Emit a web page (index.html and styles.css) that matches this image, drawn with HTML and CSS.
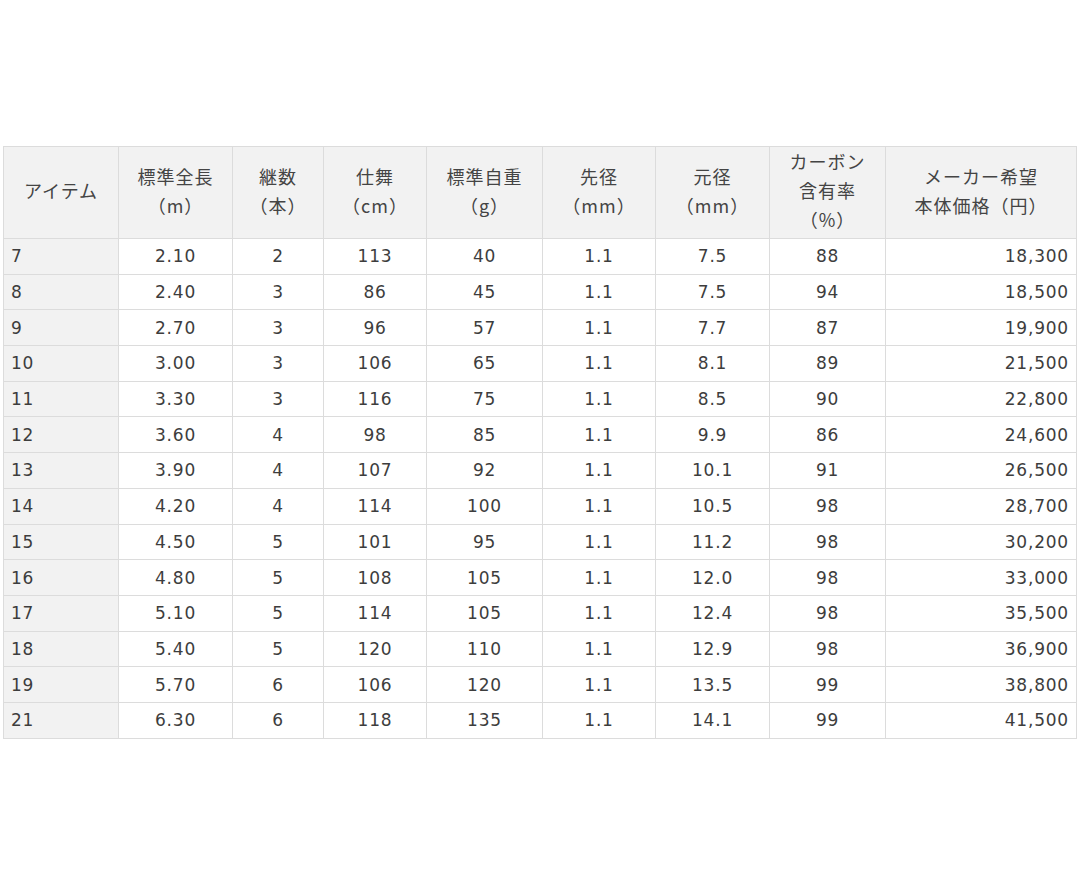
FILE: index.html
```html
<!DOCTYPE html>
<html lang="ja">
<head>
<meta charset="utf-8">
<link rel="stylesheet" href="styles.css">
</head>
<body>
<div class="wrap">
<table class="spec">
<colgroup>
<col class="c1"><col class="c2"><col class="c3"><col class="c4"><col class="c5"><col class="c6"><col class="c7"><col class="c8"><col class="c9">
</colgroup>
<thead>
<tr>
<th>アイテム</th>
<th>標準全長<br>（m）</th>
<th>継数<br>（本）</th>
<th>仕舞<br>（cm）</th>
<th>標準自重<br>（g）</th>
<th>先径<br>（mm）</th>
<th>元径<br>（mm）</th>
<th>カーボン<br>含有率<br>（%）</th>
<th>メーカー希望<br>本体価格（円）</th>
</tr>
</thead>
<tbody>
<tr><td class="item">7</td><td>2.10</td><td>2</td><td>113</td><td>40</td><td>1.1</td><td>7.5</td><td>88</td><td class="price">18,300</td></tr>
<tr><td class="item">8</td><td>2.40</td><td>3</td><td>86</td><td>45</td><td>1.1</td><td>7.5</td><td>94</td><td class="price">18,500</td></tr>
<tr><td class="item">9</td><td>2.70</td><td>3</td><td>96</td><td>57</td><td>1.1</td><td>7.7</td><td>87</td><td class="price">19,900</td></tr>
<tr><td class="item">10</td><td>3.00</td><td>3</td><td>106</td><td>65</td><td>1.1</td><td>8.1</td><td>89</td><td class="price">21,500</td></tr>
<tr><td class="item">11</td><td>3.30</td><td>3</td><td>116</td><td>75</td><td>1.1</td><td>8.5</td><td>90</td><td class="price">22,800</td></tr>
<tr><td class="item">12</td><td>3.60</td><td>4</td><td>98</td><td>85</td><td>1.1</td><td>9.9</td><td>86</td><td class="price">24,600</td></tr>
<tr><td class="item">13</td><td>3.90</td><td>4</td><td>107</td><td>92</td><td>1.1</td><td>10.1</td><td>91</td><td class="price">26,500</td></tr>
<tr><td class="item">14</td><td>4.20</td><td>4</td><td>114</td><td>100</td><td>1.1</td><td>10.5</td><td>98</td><td class="price">28,700</td></tr>
<tr><td class="item">15</td><td>4.50</td><td>5</td><td>101</td><td>95</td><td>1.1</td><td>11.2</td><td>98</td><td class="price">30,200</td></tr>
<tr><td class="item">16</td><td>4.80</td><td>5</td><td>108</td><td>105</td><td>1.1</td><td>12.0</td><td>98</td><td class="price">33,000</td></tr>
<tr><td class="item">17</td><td>5.10</td><td>5</td><td>114</td><td>105</td><td>1.1</td><td>12.4</td><td>98</td><td class="price">35,500</td></tr>
<tr><td class="item">18</td><td>5.40</td><td>5</td><td>120</td><td>110</td><td>1.1</td><td>12.9</td><td>98</td><td class="price">36,900</td></tr>
<tr><td class="item">19</td><td>5.70</td><td>6</td><td>106</td><td>120</td><td>1.1</td><td>13.5</td><td>99</td><td class="price">38,800</td></tr>
<tr><td class="item">21</td><td>6.30</td><td>6</td><td>118</td><td>135</td><td>1.1</td><td>14.1</td><td>99</td><td class="price">41,500</td></tr>
</tbody>
</table>
</div>
</body>
</html>
```
FILE: styles.css
```css
html, body {
  margin: 0;
  padding: 0;
  background: #ffffff;
}
.wrap {
  padding: 146px 2px 0 3px;
}
.spec {
  border-collapse: collapse;
  table-layout: fixed;
  width: 1073px;
  font-family: "DejaVu Sans", "Noto Sans CJK JP", sans-serif;
  font-size: 17px;
  letter-spacing: 0.8px;
  color: #3d3d3d;
}
.c1 { width: 115px; }
.c2 { width: 114px; }
.c3 { width: 91px; }
.c4 { width: 103px; }
.c5 { width: 116px; }
.c6 { width: 113px; }
.c7 { width: 114px; }
.c8 { width: 116px; }
.c9 { width: 191px; }
.spec th, .spec td {
  border: 1px solid #dcdcdc;
  padding: 0 7px;
}
.spec th {
  background: #f2f2f2;
  font-weight: normal;
  font-family: "Noto Sans CJK JP", sans-serif;
  font-size: 18px;
  letter-spacing: 1px;
  line-height: 29px;
  height: 87px;
  padding-bottom: 4px;
  text-align: center;
  vertical-align: middle;
  color: #444444;
}
.spec td {
  height: 34.7px;
  text-align: center;
  vertical-align: middle;
  background: #ffffff;
}
.spec td.item {
  text-align: left;
  background: #f2f2f2;
}
.spec td.price {
  text-align: right;
  padding-right: 7px;
}
```
